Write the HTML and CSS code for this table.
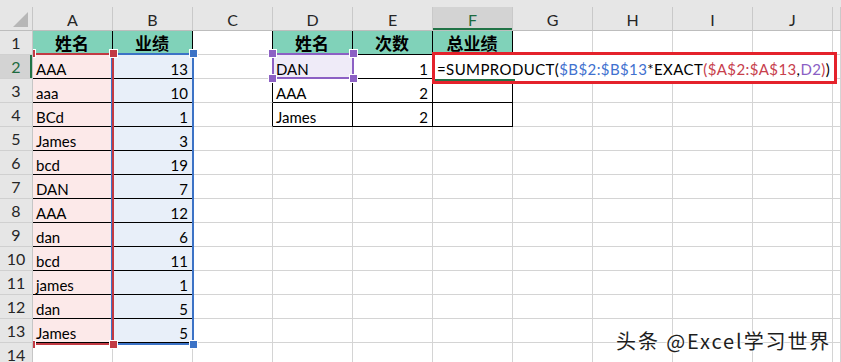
FILE: index.html
```html
<!DOCTYPE html>
<html lang="zh-CN">
<head>
    <meta charset="UTF-8">
    <meta name="viewport" content="width=device-width, initial-scale=1.0">
    <title>业绩统计</title>
    <link rel="stylesheet" href="styles.css">
    <script>
        // last entry is the sliver of the next column at the window edge
        const COLS = ["A", "B", "C", "D", "E", "F", "G", "H", "I", "J", ""];
        const ROWS = 14;

        const names = ["AAA", "aaa", "BCd", "James", "bcd", "DAN", "AAA", "dan", "bcd", "james", "dan", "James"];
        const scores = [13, 10, 1, 3, 19, 7, 12, 6, 11, 1, 5, 5];

        let values = {
            A1: "姓名", B1: "业绩",
            D1: "姓名", E1: "次数", F1: "总业绩",
            D2: "DAN", E2: 1,
            D3: "AAA", E3: 2,
            D4: "James", E4: 2
        };
        names.forEach((name, i) => {
            values["A" + (i + 2)] = name;
            values["B" + (i + 2)] = scores[i];
        });

        // blocks drawn with black borders: [first col, first row, last col, last row]
        const tables = [[0, 1, 1, 13], [3, 1, 5, 4]];

        function inTable(c, r) {
            return tables.some(t => c >= t[0] && c <= t[2] && r >= t[1] && r <= t[3]);
        }

        function fillFor(c, r) {
            if (r >= 2 && r <= 13 && c === 0) return "pink";
            if (r >= 2 && r <= 13 && c === 1) return "sky";
            if (r === 2 && c === 3) return "lilac";
            return "";
        }

        function buildSheet() {
            let grid = document.getElementById("grid");
            let html = '<div class="corner"></div>';

            COLS.forEach(col => {
                html += `<div class="col-head${col === "F" ? " active" : ""}">${col}</div>`;
            });

            for (let r = 1; r <= ROWS; r++) {
                html += `<div class="row-head${r === 2 ? " active" : ""}">${r}</div>`;
                COLS.forEach((col, c) => {
                    let v = col ? values[col + r] : undefined;
                    let cls = ["cell"];
                    if (inTable(c, r) || inTable(c + 1, r)) cls.push("edge-r");
                    if (inTable(c, r) || inTable(c, r + 1)) cls.push("edge-b");
                    if (r === 1 && inTable(c, r)) cls.push("title");
                    else if (typeof v === "number") cls.push("num");
                    let fill = fillFor(c, r);
                    if (fill) cls.push(fill);
                    html += `<div class="${cls.join(" ")}">${v === undefined ? "" : v}</div>`;
                });
            }
            grid.innerHTML = html;
        }

        window.onload = buildSheet;
    </script>
</head>
<body>
    <div class="sheet">
        <div class="top-strip"></div>
        <div class="grid" id="grid"></div>

        <!-- reference highlights while the formula is being edited -->
        <div class="range range-a">
            <span class="knob tl"></span><span class="knob tr"></span>
            <span class="knob bl"></span><span class="knob br"></span>
        </div>
        <div class="range range-b">
            <span class="knob tr"></span><span class="knob br"></span>
        </div>
        <div class="range range-d">
            <span class="knob tl"></span><span class="knob tr"></span>
            <span class="knob bl"></span><span class="knob br"></span>
        </div>

        <div class="edit-box">
            <span class="fx">=SUMPRODUCT(<span class="ref-b">$B$2:$B$13</span>*EXACT<span class="ref-a">(</span><span class="ref-a">$A$2:$A$13</span>,<span class="ref-d">D2</span><span class="ref-a">)</span>)</span>
            <span class="cursor-line"></span>
        </div>

        <div class="watermark">头条 @Excel学习世界</div>
    </div>
</body>
</html>
```

FILE: styles.css
```css
body {
    margin: 0;
    background: #fff;
    overflow: hidden;
    font-family: 'Lato', 'Liberation Sans', sans-serif;
    color: #000;
}
.sheet {
    position: relative;
    width: 841px;
    height: 362px;
    overflow: hidden;
}
.top-strip {
    height: 7px;
    background: #e6e6e6;
}
.grid {
    display: grid;
    grid-template-columns: 33px repeat(10, 80px) 8px;
    grid-auto-rows: 24px;
}
.grid > div {
    box-sizing: border-box;
}
.corner {
    position: relative;
    background: #e6e6e6;
    border-right: 1px solid #c6c6c6;
    border-bottom: 1px solid #bdbdbd;
}
.corner::after {
    content: "";
    position: absolute;
    right: 4px;
    bottom: 3px;
    width: 15px;
    height: 15px;
    background: #b7b7b7;
    clip-path: polygon(100% 0, 100% 100%, 0 100%);
}
.col-head {
    background: #e6e6e6;
    border-right: 1px solid #c9c9c9;
    border-bottom: 1px solid #bdbdbd;
    color: #262626;
    font-size: 16px;
    display: flex;
    align-items: center;
    justify-content: center;
    padding-top: 1px;
}
.col-head.active {
    background: #d3d3d3;
    color: #1d6a40;
    box-shadow: inset 0 -2px 0 #217346;
}
.row-head {
    position: relative;
    z-index: 3;
    background: #e6e6e6;
    border-right: 1px solid #c6c6c6;
    border-bottom: 1px solid #d0d0d0;
    color: #262626;
    font-size: 16px;
    display: flex;
    align-items: center;
    justify-content: center;
}
.row-head.active {
    background: #d3d3d3;
    color: #1d6a40;
    box-shadow: inset -2px 0 0 #217346;
}
.cell {
    border-right: 1px solid #d4d4d4;
    border-bottom: 1px solid #d4d4d4;
    font-size: 15px;
    line-height: 18px;
    padding: 0 4px 0 3px;
    display: flex;
    align-items: flex-end;
    white-space: nowrap;
}
.cell.edge-r {
    border-right-color: #000;
}
.cell.edge-b {
    border-bottom-color: #000;
}
.cell.num {
    justify-content: flex-end;
}
.cell.title {
    background: #80d2b9;
    font-family: 'Noto Sans CJK SC', sans-serif;
    font-weight: bold;
    font-size: 17px;
    line-height: 23px;
    align-items: center;
    justify-content: center;
}
.cell.pink {
    background: #fce9e9;
}
.cell.sky {
    background: #e8eff9;
}
.cell.lilac {
    background: #efebf8;
}
.range {
    position: absolute;
    box-sizing: border-box;
    border: 2px solid;
    z-index: 1;
}
.range-a {
    left: 31px;
    top: 53px;
    width: 83px;
    height: 292px;
    border-color: #c23a43;
    z-index: 2;
}
.range-b {
    left: 111px;
    top: 53px;
    width: 83px;
    height: 292px;
    border-color: #3c73c6;
}
.range-d {
    left: 272px;
    top: 53px;
    width: 82px;
    height: 26px;
    border-color: #8c60c4;
}
.knob {
    position: absolute;
    width: 7px;
    height: 7px;
    box-shadow: 0 0 0 1px #fff;
}
.range-a .knob { background: #c23a43; }
.range-b .knob { background: #3c73c6; }
.range-d .knob { background: #8c60c4; }
.knob.tl { left: -5px; top: -5px; }
.knob.tr { right: -5px; top: -5px; }
.knob.bl { left: -5px; bottom: -5px; }
.knob.br { right: -5px; bottom: -5px; }
.edit-box {
    position: absolute;
    left: 432px;
    top: 52px;
    width: 405px;
    height: 32px;
    box-sizing: border-box;
    border: 3px solid #e4222b;
    background: #fff;
    z-index: 4;
    display: flex;
    align-items: flex-end;
    padding: 0 0 3px 2px;
    font-size: 15px;
    line-height: 18px;
    letter-spacing: 0.4px;
    white-space: nowrap;
}
.cursor-line {
    position: absolute;
    left: 0;
    bottom: 0;
    width: 80px;
    height: 2px;
    background: #217346;
}
.ref-b { color: #3f71cf; }
.ref-a { color: #c7404c; }
.ref-d { color: #8a5ec4; }
.watermark {
    position: absolute;
    left: 616px;
    top: 326px;
    z-index: 5;
    font-family: 'Noto Sans CJK SC', sans-serif;
    font-size: 20px;
    letter-spacing: 1.9px;
    color: #1e1e1e;
    text-shadow: 0 0 2px #fff, 0 0 2px #fff, 0 0 3px #fff;
}
```
